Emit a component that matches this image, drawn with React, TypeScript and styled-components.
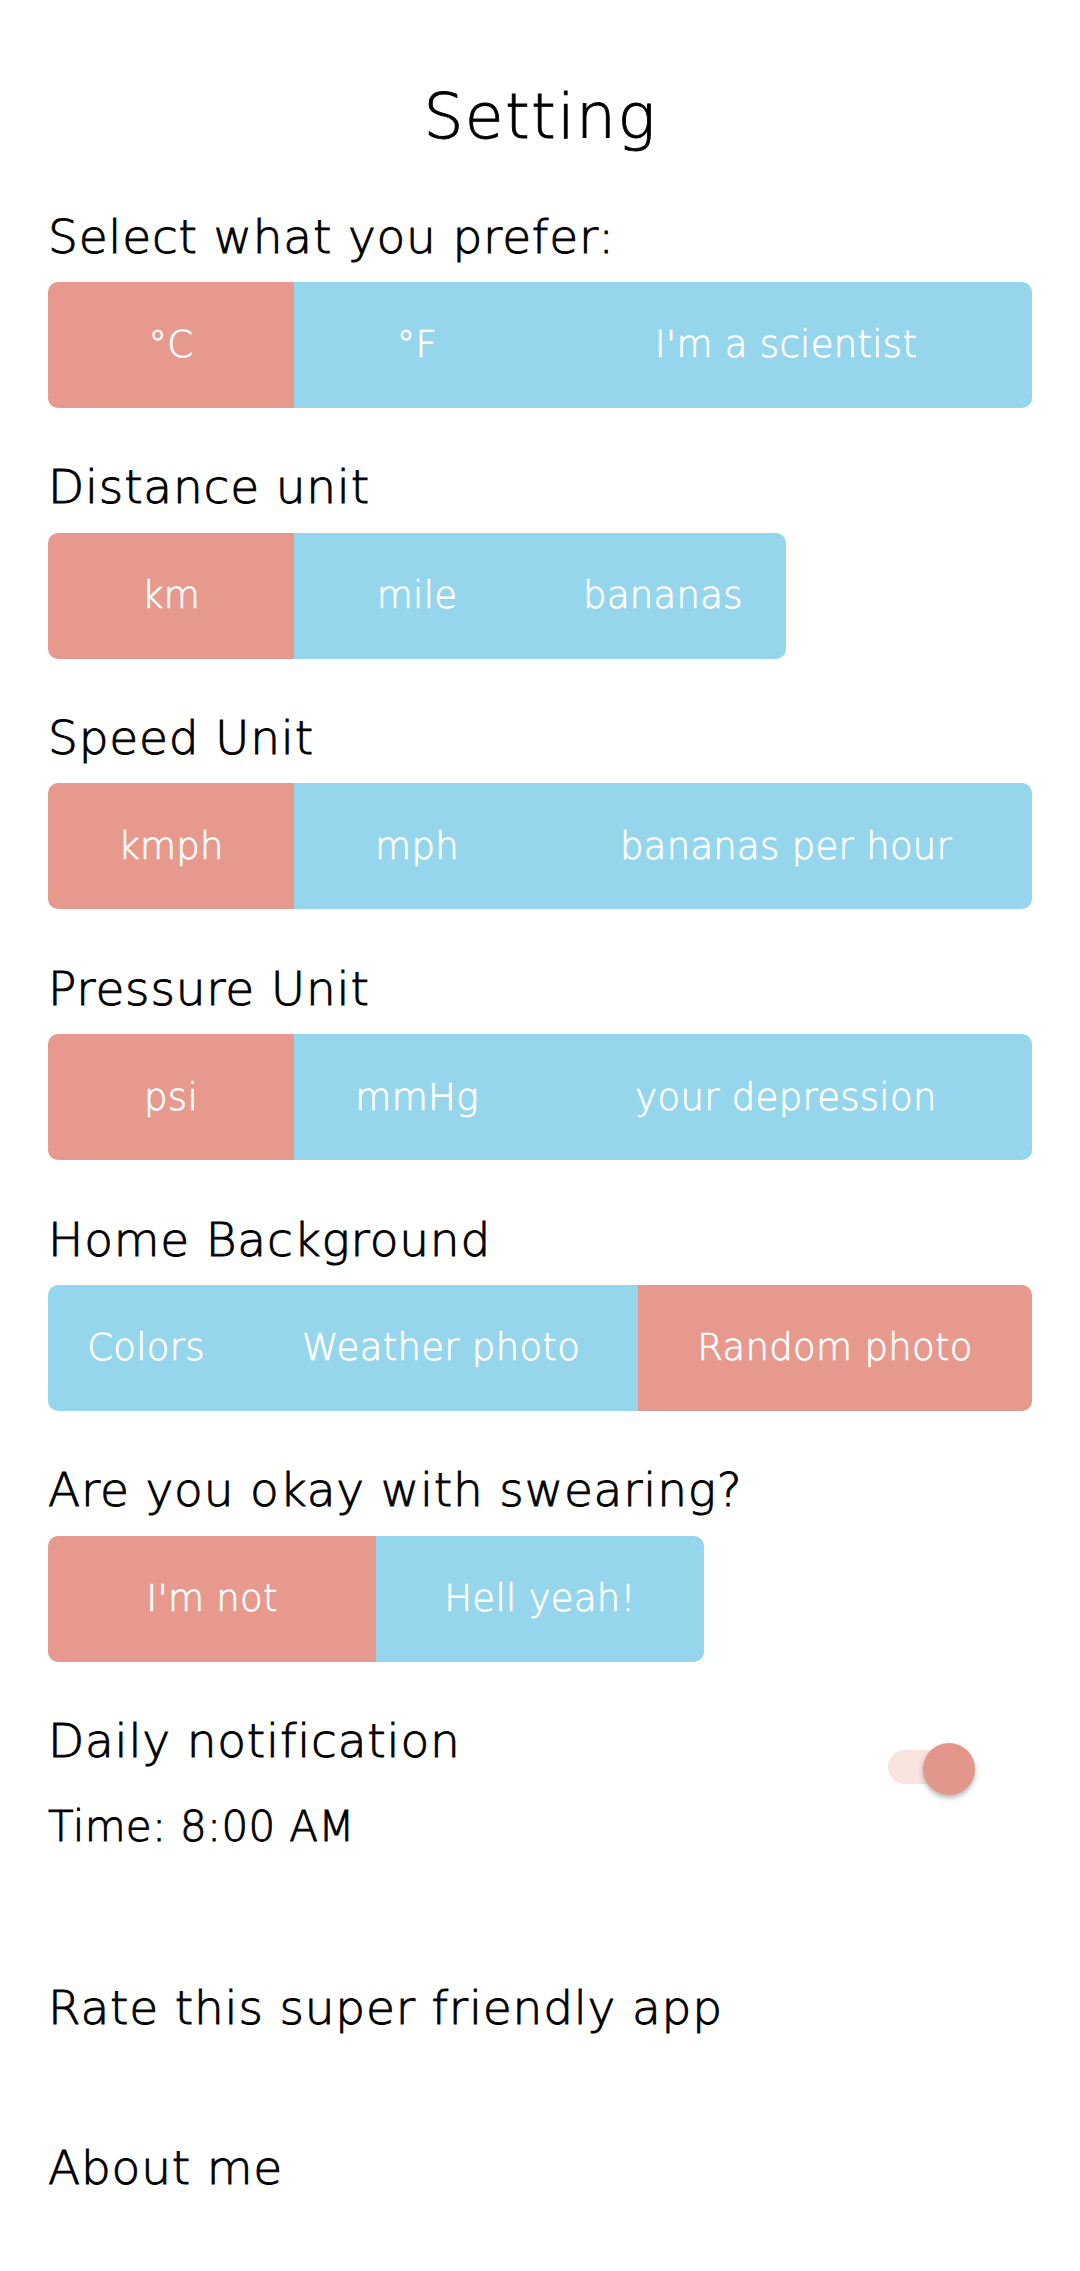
import React from "react";
import styled, { createGlobalStyle } from "styled-components";

const GlobalStyle = createGlobalStyle`
  html, body {
    margin: 0;
    padding: 0;
    background: #ffffff;
  }
  body {
    font-family: "DejaVu Sans", "Liberation Sans", sans-serif;
    font-weight: 300;
    color: #000000;
    -webkit-text-stroke-width: 0.9px;
  }
`;

const RED = "#E8998D";
const BLUE = "#95D6EC";

const Page = styled.main`
  width: 1080px;
  min-height: 2271px;
  box-sizing: border-box;
  padding: 77px 48px 60px;
  display: flex;
  flex-direction: column;
`;

const Title = styled.h1`
  margin: 0;
  font-size: 63px;
  line-height: 80px;
  font-weight: 300;
  letter-spacing: 1.4px;
  text-align: center;
`;

const Section = styled.section`
  display: flex;
  flex-direction: column;
  margin-top: 49.5px;
`;

const Label = styled.h2`
  margin: 0 0 15.3px;
  font-size: 47px;
  line-height: 60px;
  font-weight: 300;
  letter-spacing: 0.8px;
`;

const SegmentBar = styled.div`
  display: flex;
  width: fit-content;
  border-radius: 10px;
  overflow: hidden;
`;

const Segment = styled.button<{ $active: boolean; $w: number }>`
  width: ${(p) => p.$w}px;
  height: 126px;
  border: none;
  margin: 0;
  padding: 0;
  display: flex;
  align-items: center;
  justify-content: center;
  background: ${(p) => (p.$active ? RED : BLUE)};
  color: #ffffff;
  font-family: inherit;
  font-size: 37px;
  font-weight: 300;
  letter-spacing: 0.3px;
  -webkit-text-stroke-width: 0.7px;
`;

const NotifyRow = styled.div`
  display: flex;
  justify-content: space-between;
  align-items: flex-start;
  margin-top: 49px;
`;

const NotifyText = styled.div`
  display: flex;
  flex-direction: column;
`;

const NotifyTitle = styled.div`
  font-size: 47px;
  line-height: 60px;
  letter-spacing: 0.8px;
`;

const TimeText = styled.div`
  margin-top: 28.8px;
  font-size: 42px;
  line-height: 54px;
  letter-spacing: 0.3px;
`;

const Switch = styled.div`
  position: relative;
  width: 87px;
  height: 52px;
  margin-top: 32px;
  margin-right: 57px;
`;

const Track = styled.span`
  position: absolute;
  left: 0;
  top: 7px;
  width: 78px;
  height: 34px;
  border-radius: 17px;
  background: #f8e3df;
`;

const Thumb = styled.span`
  position: absolute;
  right: 0;
  top: 0;
  width: 52px;
  height: 52px;
  border-radius: 50%;
  background: #e3968a;
  box-shadow: 0 3px 5px rgba(0, 0, 0, 0.28);
`;

const LinkItem = styled.div<{ $gap: number }>`
  margin-top: ${(p) => p.$gap}px;
  font-size: 47px;
  line-height: 60px;
  letter-spacing: 0.8px;
`;

type Option = { label: string; w: number; active?: boolean };

const groups: { title: string; options: Option[] }[] = [
  {
    title: "Select what you prefer:",
    options: [
      { label: "°C", w: 246, active: true },
      { label: "°F", w: 246 },
      { label: "I'm a scientist", w: 492 },
    ],
  },
  {
    title: "Distance unit",
    options: [
      { label: "km", w: 246, active: true },
      { label: "mile", w: 246 },
      { label: "bananas", w: 246 },
    ],
  },
  {
    title: "Speed Unit",
    options: [
      { label: "kmph", w: 246, active: true },
      { label: "mph", w: 246 },
      { label: "bananas per hour", w: 492 },
    ],
  },
  {
    title: "Pressure Unit",
    options: [
      { label: "psi", w: 246, active: true },
      { label: "mmHg", w: 246 },
      { label: "your depression", w: 492 },
    ],
  },
  {
    title: "Home Background",
    options: [
      { label: "Colors", w: 196 },
      { label: "Weather photo", w: 394 },
      { label: "Random photo", w: 394, active: true },
    ],
  },
  {
    title: "Are you okay with swearing?",
    options: [
      { label: "I'm not", w: 328, active: true },
      { label: "Hell yeah!", w: 328 },
    ],
  },
];

export default function App() {
  return (
    <>
      <GlobalStyle />
      <Page>
        <Title>Setting</Title>
        {groups.map((g) => (
          <Section key={g.title}>
            <Label>{g.title}</Label>
            <SegmentBar>
              {g.options.map((o) => (
                <Segment key={o.label} $active={!!o.active} $w={o.w}>
                  {o.label}
                </Segment>
              ))}
            </SegmentBar>
          </Section>
        ))}
        <NotifyRow>
          <NotifyText>
            <NotifyTitle>Daily notification</NotifyTitle>
            <TimeText>Time: 8:00 AM</TimeText>
          </NotifyText>
          <Switch>
            <Track />
            <Thumb />
          </Switch>
        </NotifyRow>
        <LinkItem $gap={124.7}>Rate this super friendly app</LinkItem>
        <LinkItem $gap={100}>About me</LinkItem>
      </Page>
    </>
  );
}
